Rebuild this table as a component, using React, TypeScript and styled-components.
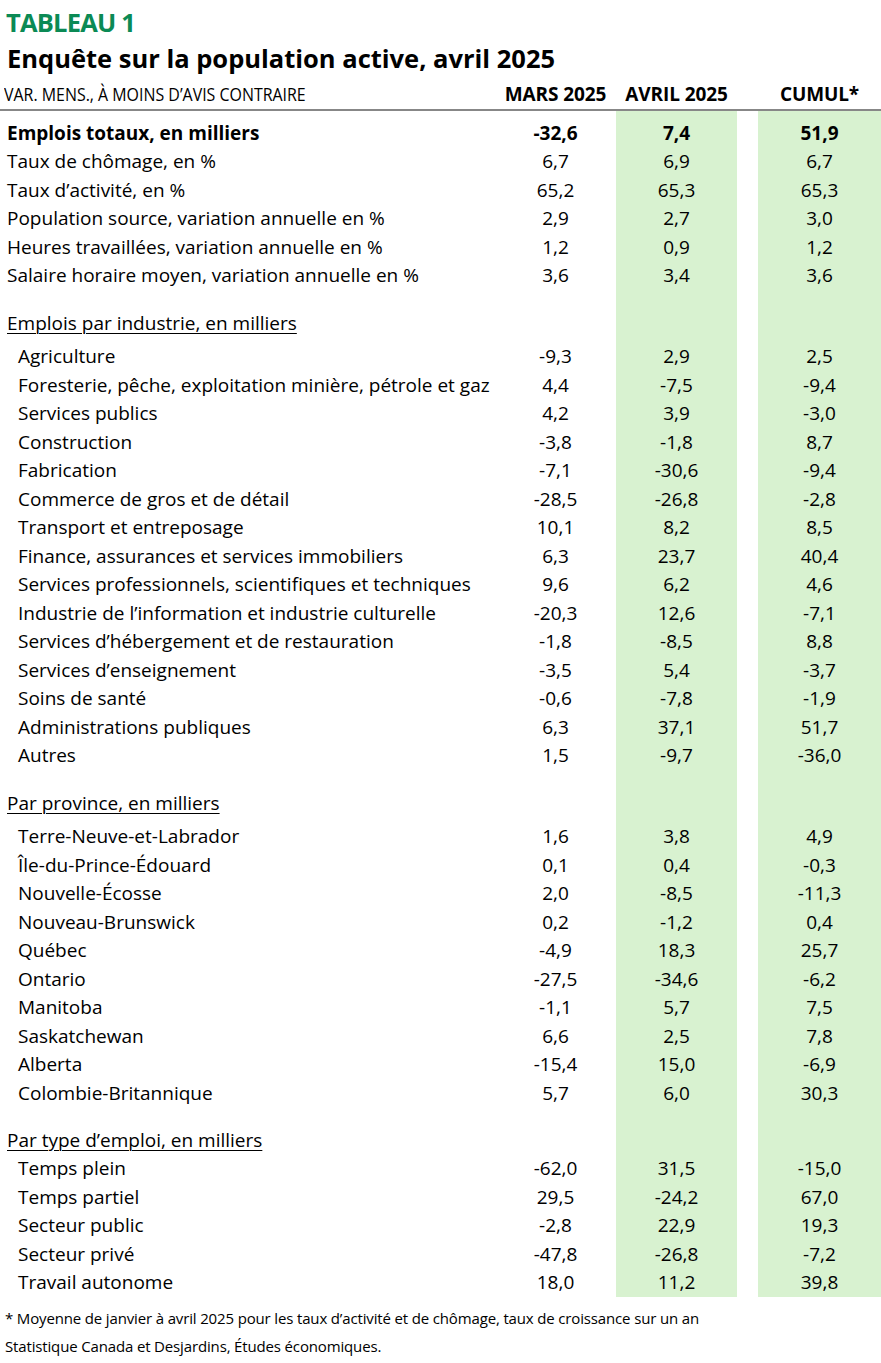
import React from "react";
import styled, { createGlobalStyle } from "styled-components";

const GlobalStyle = createGlobalStyle`
  html, body { margin: 0; padding: 0; background: #ffffff; }
  body { font-family: "Open Sans", "Noto Sans", Arial, sans-serif; color: #000; }
`;

const Page = styled.div`
  width: 881px;
  display: flex;
  flex-direction: column;
`;

const Tag = styled.div`
  padding: 4px 0 0 6px;
  height: 36px;
  line-height: 36px;
  font-size: 25.5px;
  font-weight: 700;
  color: #0b8a55;
  letter-spacing: -0.8px;
`;

const Title = styled.h1`
  margin: 0;
  padding-left: 7px;
  height: 36px;
  line-height: 36px;
  font-size: 25.5px;
  font-weight: 700;
`;

const COLS = "495px 121px 121px 21px 123px";

const HeadRow = styled.div`
  margin-top: 3px;
  display: grid;
  grid-template-columns: ${COLS};
  height: 30px;
  line-height: 30px;
  border-bottom: 2px solid #878787;
`;

const Unit = styled.div`
  padding-left: 4px;
  font-size: 18px;
  white-space: nowrap;
  span {
    display: inline-block;
    transform: scaleX(0.885);
    transform-origin: left center;
  }
`;

const ColHead = styled.div`
  font-size: 19px;
  font-weight: 700;
  text-align: center;
  white-space: nowrap;
  letter-spacing: -0.1px;
`;

const Body = styled.div`
  display: flex;
  flex-direction: column;
`;

const Row = styled.div`
  display: grid;
  grid-template-columns: ${COLS};
`;

const Label = styled.div<{ $indent?: boolean; $bold?: boolean; $pt: number; $section?: boolean }>`
  padding-top: ${(p) => p.$pt}px;
  padding-left: ${(p) => (p.$indent ? 18 : 7)}px;
  line-height: 28.5px;
  font-size: 19px;
  font-weight: ${(p) => (p.$bold ? 700 : 400)};
  white-space: nowrap;
  text-decoration: ${(p) => (p.$section ? "underline" : "none")};
  text-decoration-thickness: 1px;
  text-underline-offset: 3px;
`;

const Num = styled.div<{ $shade?: boolean; $bold?: boolean; $pt: number }>`
  padding-top: ${(p) => p.$pt}px;
  line-height: 28.5px;
  min-height: 28.5px;
  text-align: center;
  font-size: 19px;
  font-weight: ${(p) => (p.$bold ? 700 : 400)};
  background: ${(p) => (p.$shade ? "#d8f2d0" : "transparent")};
`;

const Notes = styled.div`
  margin-top: 7px;
  padding-left: 5px;
  font-size: 15px;
  line-height: 28px;
  letter-spacing: -0.15px;
  white-space: nowrap;
`;

type Line = [string, string, string, string];

const top: Line[] = [
  ["Emplois totaux, en milliers", "-32,6", "7,4", "51,9"],
  ["Taux de chômage, en %", "6,7", "6,9", "6,7"],
  ["Taux d’activité, en %", "65,2", "65,3", "65,3"],
  ["Population source, variation annuelle en %", "2,9", "2,7", "3,0"],
  ["Heures travaillées, variation annuelle en %", "1,2", "0,9", "1,2"],
  ["Salaire horaire moyen, variation annuelle en %", "3,6", "3,4", "3,6"],
];

const sections: { title: string; gapBefore: number; gapAfter: number; rows: Line[] }[] = [
  {
    title: "Emplois par industrie, en milliers",
    gapBefore: 19,
    gapAfter: 5,
    rows: [
      ["Agriculture", "-9,3", "2,9", "2,5"],
      ["Foresterie, pêche, exploitation minière, pétrole et gaz", "4,4", "-7,5", "-9,4"],
      ["Services publics", "4,2", "3,9", "-3,0"],
      ["Construction", "-3,8", "-1,8", "8,7"],
      ["Fabrication", "-7,1", "-30,6", "-9,4"],
      ["Commerce de gros et de détail", "-28,5", "-26,8", "-2,8"],
      ["Transport et entreposage", "10,1", "8,2", "8,5"],
      ["Finance, assurances et services immobiliers", "6,3", "23,7", "40,4"],
      ["Services professionnels, scientifiques et techniques", "9,6", "6,2", "4,6"],
      ["Industrie de l’information et industrie culturelle", "-20,3", "12,6", "-7,1"],
      ["Services d’hébergement et de restauration", "-1,8", "-8,5", "8,8"],
      ["Services d’enseignement", "-3,5", "5,4", "-3,7"],
      ["Soins de santé", "-0,6", "-7,8", "-1,9"],
      ["Administrations publiques", "6,3", "37,1", "51,7"],
      ["Autres", "1,5", "-9,7", "-36,0"],
    ],
  },
  {
    title: "Par province, en milliers",
    gapBefore: 19,
    gapAfter: 5,
    rows: [
      ["Terre-Neuve-et-Labrador", "1,6", "3,8", "4,9"],
      ["Île-du-Prince-Édouard", "0,1", "0,4", "-0,3"],
      ["Nouvelle-Écosse", "2,0", "-8,5", "-11,3"],
      ["Nouveau-Brunswick", "0,2", "-1,2", "0,4"],
      ["Québec", "-4,9", "18,3", "25,7"],
      ["Ontario", "-27,5", "-34,6", "-6,2"],
      ["Manitoba", "-1,1", "5,7", "7,5"],
      ["Saskatchewan", "6,6", "2,5", "7,8"],
      ["Alberta", "-15,4", "15,0", "-6,9"],
      ["Colombie-Britannique", "5,7", "6,0", "30,3"],
    ],
  },
  {
    title: "Par type d’emploi, en milliers",
    gapBefore: 18.5,
    gapAfter: 0,
    rows: [
      ["Temps plein", "-62,0", "31,5", "-15,0"],
      ["Temps partiel", "29,5", "-24,2", "67,0"],
      ["Secteur public", "-2,8", "22,9", "19,3"],
      ["Secteur privé", "-47,8", "-26,8", "-7,2"],
      ["Travail autonome", "18,0", "11,2", "39,8"],
    ],
  },
];

const DataRow: React.FC<{ line: Line; indent?: boolean; bold?: boolean; pt?: number }> = ({
  line,
  indent,
  bold,
  pt = 0,
}) => (
  <Row>
    <Label $indent={indent} $bold={bold} $pt={pt}>
      {line[0]}
    </Label>
    <Num $bold={bold} $pt={pt}>
      {line[1]}
    </Num>
    <Num $shade $bold={bold} $pt={pt}>
      {line[2]}
    </Num>
    <div />
    <Num $shade $bold={bold} $pt={pt}>
      {line[3]}
    </Num>
  </Row>
);

const SectionRow: React.FC<{ title: string; pt: number }> = ({ title, pt }) => (
  <Row>
    <Label $section $pt={pt}>
      {title}
    </Label>
    <Num $pt={pt} />
    <Num $shade $pt={pt} />
    <div />
    <Num $shade $pt={pt} />
  </Row>
);

export default function App() {
  return (
    <Page>
      <GlobalStyle />
      <Tag>TABLEAU 1</Tag>
      <Title>Enquête sur la population active, avril 2025</Title>
      <HeadRow>
        <Unit>
          <span>VAR. MENS., À MOINS D’AVIS CONTRAIRE</span>
        </Unit>
        <ColHead>MARS 2025</ColHead>
        <ColHead>AVRIL 2025</ColHead>
        <div />
        <ColHead>CUMUL*</ColHead>
      </HeadRow>
      <Body>
        {top.map((l, i) => (
          <DataRow key={l[0]} line={l} bold={i === 0} pt={i === 0 ? 7.75 : 0} />
        ))}
        {sections.map((s) => (
          <React.Fragment key={s.title}>
            <SectionRow title={s.title} pt={s.gapBefore} />
            {s.rows.map((l, i) => (
              <DataRow key={l[0]} line={l} indent pt={i === 0 ? s.gapAfter : 0} />
            ))}
          </React.Fragment>
        ))}
      </Body>
      <Notes>
        <div>* Moyenne de janvier à avril 2025 pour les taux d’activité et de chômage, taux de croissance sur un an</div>
        <div>Statistique Canada et Desjardins, Études économiques.</div>
      </Notes>
    </Page>
  );
}
